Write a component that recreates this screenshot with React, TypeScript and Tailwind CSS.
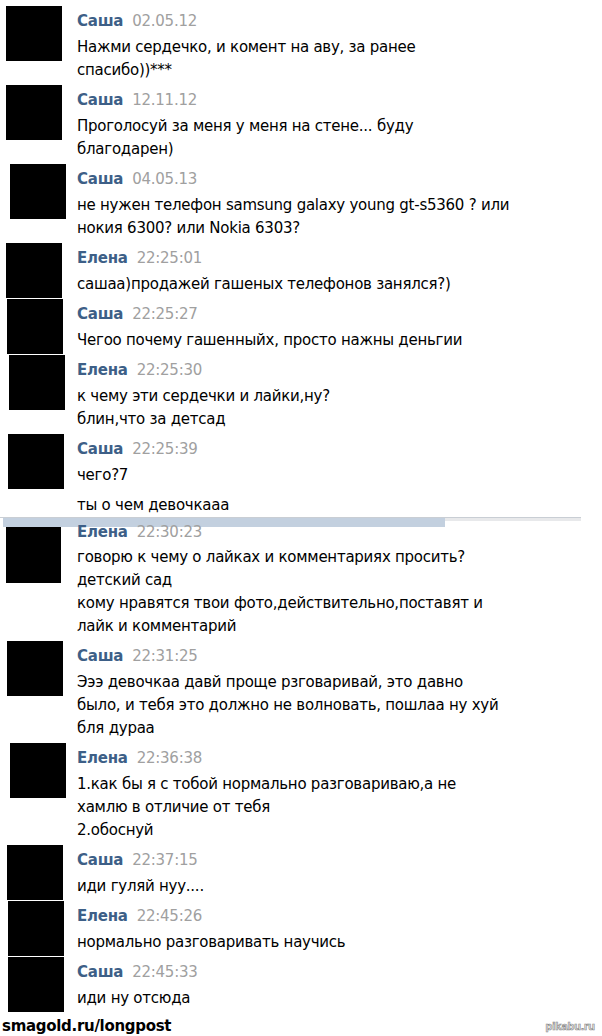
const messages = [
  { name: "Саша", time: "02.05.12", ml: "ml-[6px]", lines: ["Нажми сердечко, и комент на аву, за ранее", "спасибо))***"] },
  { name: "Саша", time: "12.11.12", ml: "ml-[6px]", lines: ["Проголосуй за меня у меня на стене... буду", "благодарен)"] },
  { name: "Саша", time: "04.05.13", ml: "ml-[10px]", lines: ["не нужен телефон samsung galaxy young gt-s5360 ? или", "нокия 6300? или Nokia 6303?"] },
  { name: "Елена", time: "22:25:01", ml: "ml-[6px]", lines: ["сашаа)продажей гашеных телефонов занялся?)"] },
  { name: "Саша", time: "22:25:27", ml: "ml-[7px]", lines: ["Чегоо почему гашенныйх, просто нажны деньгии"] },
  { name: "Елена", time: "22:25:30", ml: "ml-[9px]", lines: ["к чему эти сердечки и лайки,ну?", "блин,что за детсад"] },
];

const messagesAfter = [
  { name: "Саша", time: "22:31:25", ml: "ml-[7px]", lines: ["Эээ девочкаа давй проще рзговаривай, это давно", "было, и тебя это должно не волновать, пошлаа ну хуй", "бля дураа"] },
  { name: "Елена", time: "22:36:38", ml: "ml-[10px]", lines: ["1.как бы я с тобой нормально разговариваю,а не", "хамлю в отличие от тебя", "2.обоснуй"] },
  { name: "Саша", time: "22:37:15", ml: "ml-[7px]", lines: ["иди гуляй нуу...."] },
  { name: "Елена", time: "22:45:26", ml: "ml-[8px]", lines: ["нормально разговаривать научись"] },
  { name: "Саша", time: "22:45:33", ml: "ml-[8px]", lines: ["иди ну отсюда"] },
];

type Msg = { name: string; time: string; ml: string; lines: string[] };

const Header = ({ name, time }: { name: string; time: string }) => (
  <div className="flex items-baseline gap-[9px]">
    <span className="font-bold text-[#3d5f87]">{name}</span>
    <span className="text-[#a0a0a0]">{time}</span>
  </div>
);

const Message = ({ m }: { m: Msg }) => (
  <div className="flex min-h-[56px]">
    <div className="w-[77px] shrink-0">
      <div className={`${m.ml} w-[56px] h-[55px] bg-black`}></div>
    </div>
    <div className="flex flex-col pb-[3px]">
      <div className="h-[30px] leading-[30px]">
        <Header name={m.name} time={m.time} />
      </div>
      {m.lines.map((l, i) => (
        <div key={i} className="h-[23px] leading-[23px] whitespace-nowrap">{l}</div>
      ))}
    </div>
  </div>
);

export default function App() {
  return (
    <div className="w-[602px] h-[1036px] bg-white overflow-hidden font-['DejaVu_Sans',sans-serif] text-[15px] tracking-[-0.25px] text-black pt-[6px]">
      {messages.map((m, i) => (
        <Message key={i} m={m} />
      ))}

      {/* last message before the cut */}
      <div className="flex">
        <div className="w-[77px] shrink-0">
          <div className="ml-[8px] w-[56px] h-[55px] bg-black"></div>
        </div>
        <div className="flex flex-col">
          <div className="h-[30px] leading-[30px]">
            <Header name="Саша" time="22:25:39" />
          </div>
          <div className="h-[23px] leading-[23px]">чего?7</div>
          <div className="mt-[7px] h-[23px] leading-[23px]">ты о чем девочкааа</div>
        </div>
      </div>

      {/* seam between the two screenshots */}
      <div className="w-[581px] h-[10px] flex flex-col">
        <div className="h-[1px] bg-[#c9ced4]"></div>
        <div className="flex h-[9px]">
          <div className="ml-[3px] w-[442px] bg-[#c3d0df]"></div>
          <div className="flex-1 h-[3px] bg-[#e8e9eb]"></div>
        </div>
      </div>

      <div className="flex">
        <div className="w-[77px] shrink-0">
          <div className="ml-[6px] w-[55px] h-[56px] bg-black"></div>
        </div>
        <div className="flex flex-col pb-[3px]">
          <div className="h-[19px] leading-[10px]">
            <Header name="Елена" time="22:30:23" />
          </div>
          {["говорю к чему о лайках и комментариях просить?", "детский сад", "кому нравятся твои фото,действительно,поставят и", "лайк и комментарий"].map((l, i) => (
            <div key={i} className="h-[23px] leading-[23px] whitespace-nowrap">{l}</div>
          ))}
        </div>
      </div>

      {messagesAfter.map((m, i) => (
        <Message key={i} m={m} />
      ))}

      <div className="h-[24px] flex items-center justify-between pl-[2px] pr-[7px] pt-[2px]">
        <span className="font-bold text-[15px] tracking-[-0.3px] text-black">smagold.ru/longpost</span>
        <span className="text-[11px] font-bold tracking-[0px] text-white [-webkit-text-stroke:0.7px_#8a8a8a] font-['Liberation_Sans',sans-serif]">pikabu.ru</span>
      </div>
    </div>
  );
}
